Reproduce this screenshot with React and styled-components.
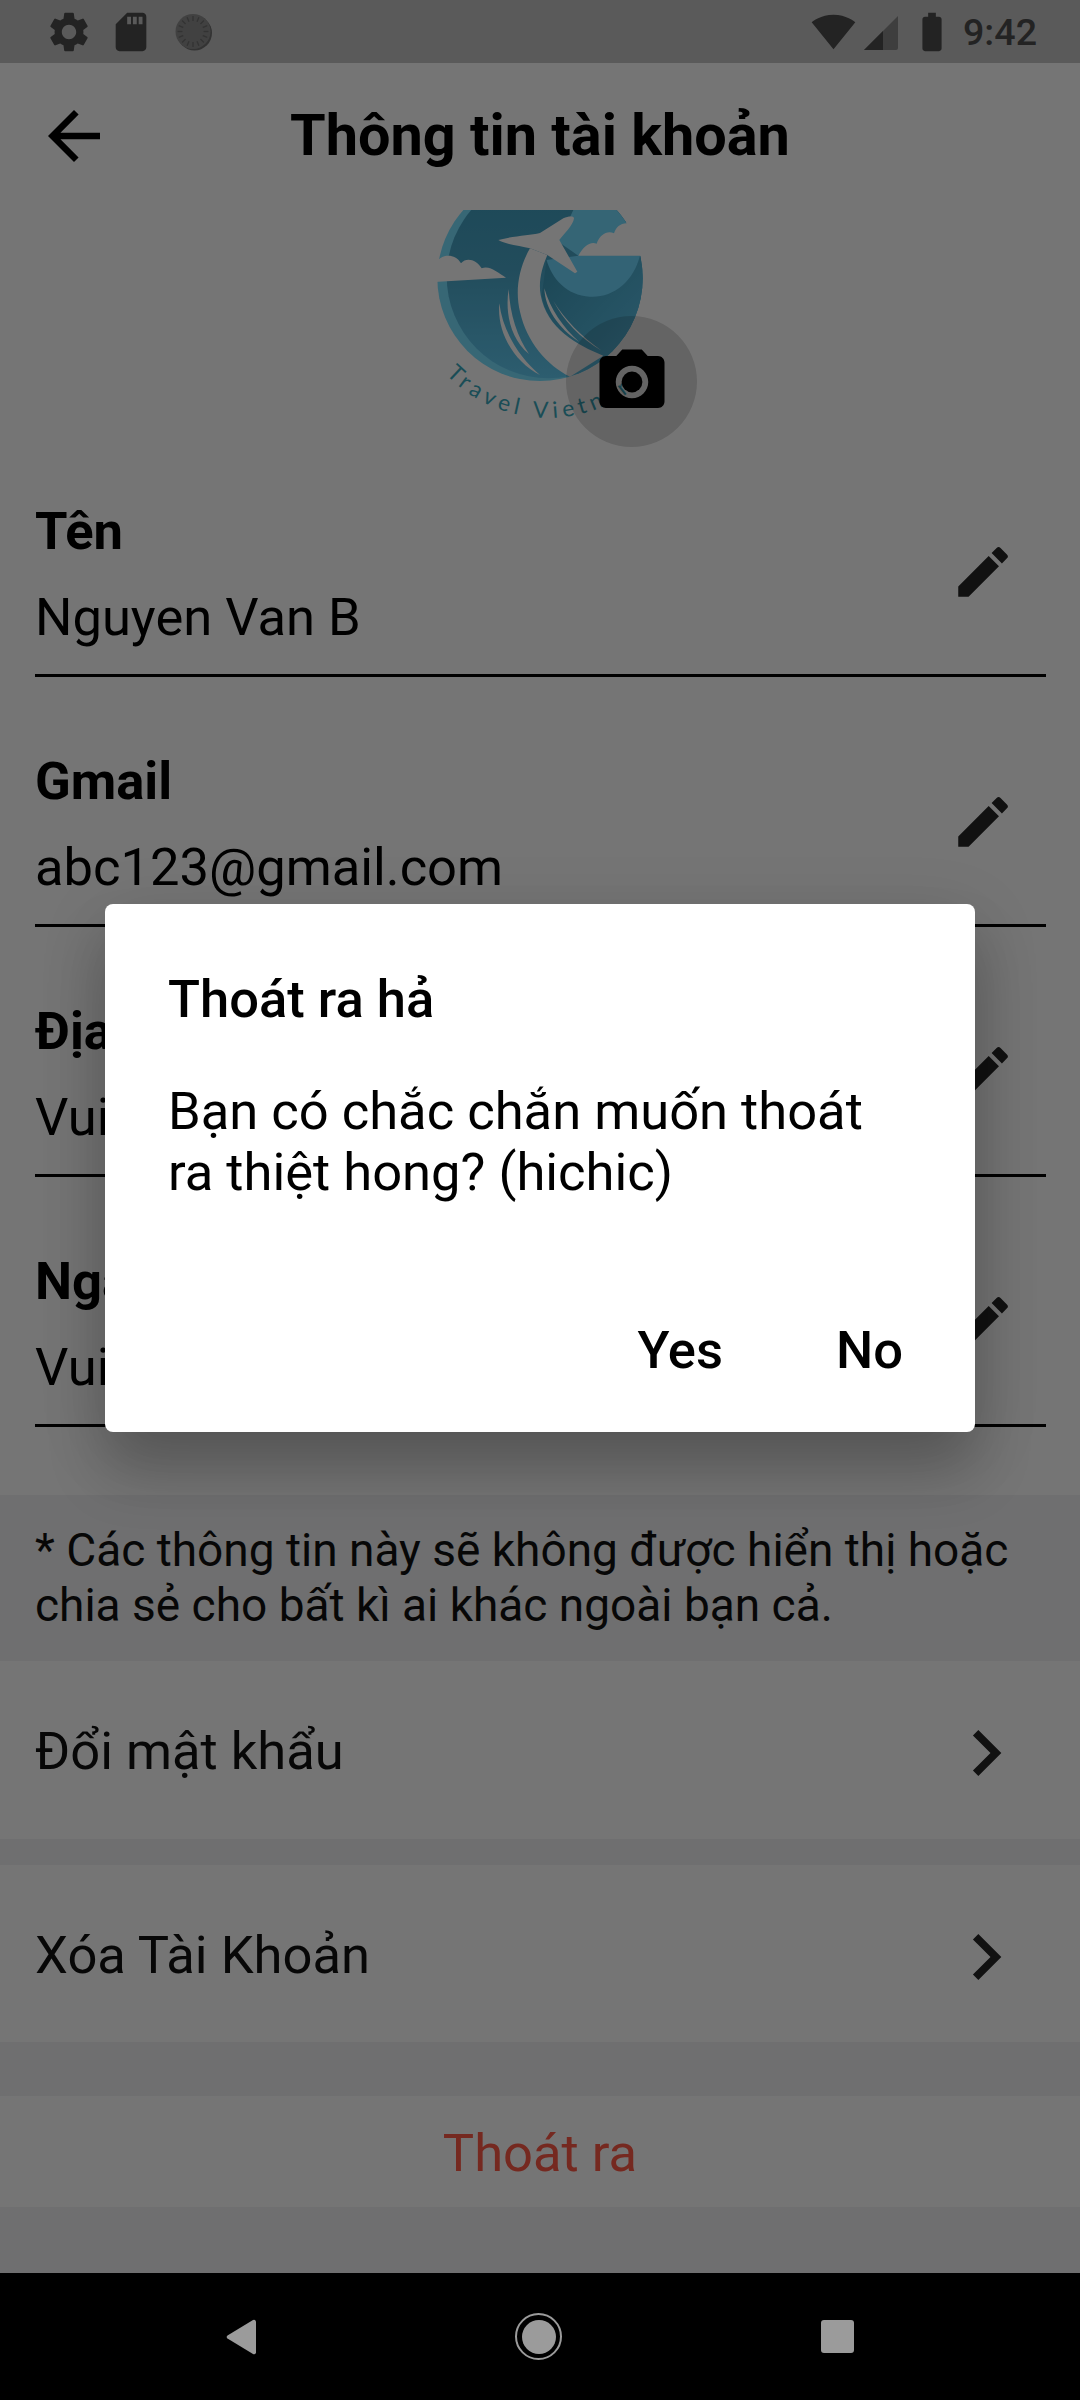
import React from 'react';
import styled, { createGlobalStyle } from 'styled-components';
import {
  MdArrowBack,
  MdBatteryStd,
  MdCameraAlt,
  MdChevronRight,
  MdEdit,
  MdSdStorage,
  MdSettings,
  MdSignalWifi4Bar,
} from 'react-icons/md';

const GlobalStyle = createGlobalStyle`
  html, body {
    margin: 0;
    padding: 0;
    background: #000;
  }
  * {
    box-sizing: border-box;
  }
`;

const fields = [
  { label: 'Tên', value: 'Nguyen Van B' },
  { label: 'Gmail', value: 'abc123@gmail.com' },
  { label: 'Địa chỉ', value: 'Vui lòng cập nhật' },
  { label: 'Ngày sinh', value: 'Vui lòng cập nhật' },
];

const ticks = Array.from({ length: 16 }, (_, i) => (i * 360) / 16);

const Logo = () => (
  <LogoSvg viewBox="0 15 660 645">
    <defs>
      <linearGradient id="inner" x1="0" y1="0" x2="0" y2="1">
        <stop offset="0" stopColor="#3f9dbf" />
        <stop offset="0.45" stopColor="#4aa6c8" />
        <stop offset="1" stopColor="#62cbf2" />
      </linearGradient>
      <linearGradient id="wave" x1="0" y1="0" x2="1" y2="1">
        <stop offset="0" stopColor="#3c98b8" />
        <stop offset="1" stopColor="#62c8ee" />
      </linearGradient>
      <clipPath id="disc">
        <circle cx="330" cy="220" r="308" />
      </clipPath>
    </defs>
    <circle cx="330" cy="220" r="308" fill="#78e0ff" />
    <g clipPath="url(#disc)">
      <circle cx="356" cy="214" r="306" fill="url(#inner)" />
      <path d="M430 15L580 15L640 152L445 152L385 110Z" fill="#74dcff" />
      <path
        d="M350 165C365 220 410 272 480 275C550 278 610 230 630 152L660 152L660 500L520 460C440 420 350 370 335 270Z"
        fill="url(#wave)"
      />
      <path d="M350 165L445 152L630 152C610 230 550 278 480 275C410 272 365 220 350 165Z" fill="#70d8ff" />
    </g>
    <path
      d="M590 55C570 55 558 68 552 85C532 76 510 88 500 116C480 108 460 125 445 152L660 152L660 15L575 15Z"
      fill="#fff"
    />
    <path
      d="M0 168L25 165C35 150 75 142 93 175C110 155 140 165 155 190C180 180 205 205 228 218L0 232Z"
      fill="#fff"
    />
    <path
      d="M300 130C265 190 255 260 270 320C290 410 350 480 420 515L520 452C440 420 350 370 332 270C325 230 335 190 352 150Z"
      fill="#fff"
    />
    <path
      d="M205 105C250 92 300 92 330 84L400 40C415 33 432 32 432 40C430 60 400 90 388 105L442 200L435 205L352 150L300 130C270 122 225 118 205 105Z"
      fill="#fff"
    />
    <g fill="#fff">
      <path d="M236 252C225 320 240 400 297 447C262 395 240 330 236 252Z" />
      <path d="M208 295C200 380 250 470 330 510C270 460 218 380 208 295Z" />
      <path d="M343 250C345 310 385 370 447 410C400 370 360 310 343 250Z" />
      <path d="M370 288C400 345 450 400 515 437C455 395 405 345 370 288Z" />
    </g>
    <path id="logoArc" d="M48 508A420 420 0 0 0 660 505" fill="none" />
    <LogoText>
      <textPath href="#logoArc">Travel Vietnam</textPath>
    </LogoText>
  </LogoSvg>
);

const App = () => (
  <Page>
    <GlobalStyle />
    <Screen>
      <StatusBar>
        <StatusGroup>
          <MdSettings size={48} />
          <SdIcon size={46} />
          <SyncIcon viewBox="0 0 38 38">
            <circle cx="19.5" cy="20" r="17.5" fill="#6f6f6f" />
            <circle cx="18" cy="18.5" r="17.5" fill="#8f8f8f" />
            {ticks.map((deg) => (
              <rect key={deg} x="17.3" y="3" width="1.4" height="5" fill="#707070" transform={`rotate(${deg} 18 18.5)`} />
            ))}
          </SyncIcon>
        </StatusGroup>
        <StatusGroup>
          <MdSignalWifi4Bar size={45} />
          <SignalIcon viewBox="0 0 35 35">
            <path d="M1 35L35 1V33a2 2 0 0 1-2 2Z" fill="#888" />
            <path d="M1 35L20 16V35Z" fill="#4c4c4c" />
          </SignalIcon>
          <BatteryIcon size={46} />
          <Clock>9:42</Clock>
        </StatusGroup>
      </StatusBar>

      <Header>
        <BackButton>
          <MdArrowBack size={78} />
        </BackButton>
        <Title>Thông tin tài khoản</Title>
      </Header>

      <AvatarWrap>
        <Logo />
        <CameraBadge>
          <MdCameraAlt size={78} />
        </CameraBadge>
      </AvatarWrap>

      {fields.map((field) => (
        <Field key={field.label}>
          <FieldText>
            <FieldLabel>{field.label}</FieldLabel>
            <FieldValue>{field.value}</FieldValue>
          </FieldText>
          <EditIcon>
            <MdEdit size={66} />
          </EditIcon>
        </Field>
      ))}

      <Settings>
        <Note>* Các thông tin này sẽ không được hiển thị hoặc chia sẻ cho bất kì ai khác ngoài bạn cả.</Note>
        <LinkRow $height={178}>
          <LinkLabel>Đổi mật khẩu</LinkLabel>
          <Chevron size={92} />
        </LinkRow>
        <LinkRow $height={177} $top={26}>
          <LinkLabel>Xóa Tài Khoản</LinkLabel>
          <Chevron size={92} />
        </LinkRow>
        <LogoutRow>Thoát ra</LogoutRow>
      </Settings>

      <Overlay>
        <Dialog>
          <DialogTitle>Thoát ra hả</DialogTitle>
          <DialogBody>Bạn có chắc chắn muốn thoát ra thiệt hong? (hichic)</DialogBody>
          <DialogActions>
            <DialogButton>Yes</DialogButton>
            <DialogButton>No</DialogButton>
          </DialogActions>
        </Dialog>
      </Overlay>
    </Screen>

    <NavBar>
      <NavBack viewBox="0 0 30 36">
        <path d="M1.5 16.5L27 1a2 2 0 0 1 3 1.5v31a2 2 0 0 1-3 1.5L1.5 19.5a2 2 0 0 1 0-3Z" />
      </NavBack>
      <NavHome>
        <NavHomeDot />
      </NavHome>
      <NavSquare />
    </NavBar>
  </Page>
);

export default App;

const Page = styled.div`
  width: 1080px;
  height: 2400px;
  display: flex;
  flex-direction: column;
  overflow: hidden;
  font-family: Roboto, "Noto Sans", sans-serif;
  color: #000;
`;

const Screen = styled.div`
  position: relative;
  height: 2273px;
  background: #fff;
  display: flex;
  flex-direction: column;
`;

const StatusBar = styled.div`
  height: 63px;
  flex-shrink: 0;
  padding: 0 43px 0 45px;
  background: #c4c4c4;
  color: #4c4c4c;
  display: flex;
  align-items: center;
  justify-content: space-between;
`;

const StatusGroup = styled.div`
  display: flex;
  align-items: center;
`;

const SdIcon = styled(MdSdStorage)`
  margin-left: 15px;
`;

const SyncIcon = styled.svg`
  width: 38px;
  height: 38px;
  margin-left: 21px;
`;

const SignalIcon = styled.svg`
  width: 35px;
  height: 35px;
  margin-left: 7px;
  margin-top: 2px;
`;

const BatteryIcon = styled(MdBatteryStd)`
  margin-left: 11px;
`;

const Clock = styled.span`
  margin-left: 8px;
  font-size: 37.6px;
  font-weight: 500;
  line-height: 42px;
`;

const Header = styled.div`
  height: 147px;
  flex-shrink: 0;
  padding-bottom: 2px;
  display: grid;
  grid-template-columns: 1fr auto 1fr;
  align-items: center;
`;

const BackButton = styled.div`
  display: flex;
  margin-left: 35px;
`;

const Title = styled.h1`
  margin: 0;
  font-size: 57.6px;
  font-weight: 700;
  line-height: 67px;
`;

const AvatarWrap = styled.div`
  position: relative;
  width: 220px;
  height: 217px;
  flex-shrink: 0;
  margin: 0 auto;
`;

const LogoSvg = styled.svg`
  display: block;
  width: 220px;
  height: 215px;
`;

const LogoText = styled.text`
  font-family: Lato, sans-serif;
  font-size: 68px;
  letter-spacing: 15px;
  fill: #3aa8bc;
`;

const CameraBadge = styled.div`
  position: absolute;
  left: 136px;
  top: 106px;
  width: 131px;
  height: 131px;
  border-radius: 50%;
  background: rgba(0, 0, 0, 0.15);
  display: flex;
  align-items: center;
  justify-content: center;
`;

const Field = styled.div`
  height: 250px;
  flex-shrink: 0;
  margin: 0 34px 0 35px;
  padding: 76px 30px 0 0;
  border-bottom: 3px solid #000;
  display: flex;
`;

const FieldText = styled.div`
  flex: 1;
  display: flex;
  flex-direction: column;
  gap: 30px;
`;

const FieldLabel = styled.div`
  font-size: 52.5px;
  font-weight: 700;
  line-height: 56px;
`;

const FieldValue = styled.div`
  font-size: 52.5px;
  line-height: 56px;
`;

const EditIcon = styled.div`
  display: flex;
  margin-top: 36px;
  color: #262626;
  height: 66px;
`;

const Settings = styled.div`
  flex: 1;
  margin-top: 68px;
  background: #f2f2f3;
  display: flex;
  flex-direction: column;
`;

const Note = styled.p`
  margin: 0;
  height: 166px;
  padding: 28px 35px 0;
  font-size: 46px;
  line-height: 55px;
  color: #111;
`;

const LinkRow = styled.div`
  height: ${(props) => props.$height}px;
  margin-top: ${(props) => props.$top || 0}px;
  padding: 2px 48px 0 35px;
  background: #fff;
  display: flex;
  align-items: center;
  justify-content: space-between;
`;

const LinkLabel = styled.span`
  font-size: 52.5px;
  line-height: 60px;
  color: #111;
`;

const Chevron = styled(MdChevronRight)`
  margin-top: 4px;
  color: #262626;
`;

const LogoutRow = styled.div`
  height: 111px;
  margin-top: 54px;
  padding-top: 2px;
  background: #fff;
  font-size: 52.5px;
  line-height: 111px;
  text-align: center;
  color: #ff5a47;
`;

const Overlay = styled.div`
  position: absolute;
  inset: 0;
  padding-top: 63px;
  background: rgba(0, 0, 0, 0.54);
  display: flex;
  align-items: center;
  justify-content: center;
`;

const Dialog = styled.div`
  width: 870px;
  height: 528px;
  padding: 65px 63px 0;
  background: #fff;
  border-radius: 8px;
  box-shadow: 0 40px 60px rgba(0, 0, 0, 0.2), 0 15px 70px rgba(0, 0, 0, 0.12);
  display: flex;
  flex-direction: column;
`;

const DialogTitle = styled.div`
  font-size: 52.5px;
  font-weight: 500;
  line-height: 60px;
`;

const DialogBody = styled.div`
  margin-top: 52px;
  font-size: 52.5px;
  line-height: 61px;
`;

const DialogActions = styled.div`
  margin-top: 117px;
  margin-right: 9px;
  display: flex;
  justify-content: flex-end;
  gap: 113px;
`;

const DialogButton = styled.div`
  font-size: 52.5px;
  font-weight: 500;
  line-height: 60px;
`;

const NavBar = styled.div`
  flex: 1;
  background: #000;
  display: flex;
  align-items: center;
  justify-content: center;
  gap: 259px;
`;

const NavBack = styled.svg`
  width: 30px;
  height: 36px;
  fill: #9b9b9b;
`;

const NavHome = styled.div`
  width: 47px;
  height: 47px;
  border: 2px solid #9b9b9b;
  border-radius: 50%;
  display: flex;
  align-items: center;
  justify-content: center;
`;

const NavHomeDot = styled.div`
  width: 34px;
  height: 34px;
  border-radius: 50%;
  background: #9b9b9b;
`;

const NavSquare = styled.div`
  width: 33px;
  height: 33px;
  border-radius: 3px;
  background: #9b9b9b;
`;
